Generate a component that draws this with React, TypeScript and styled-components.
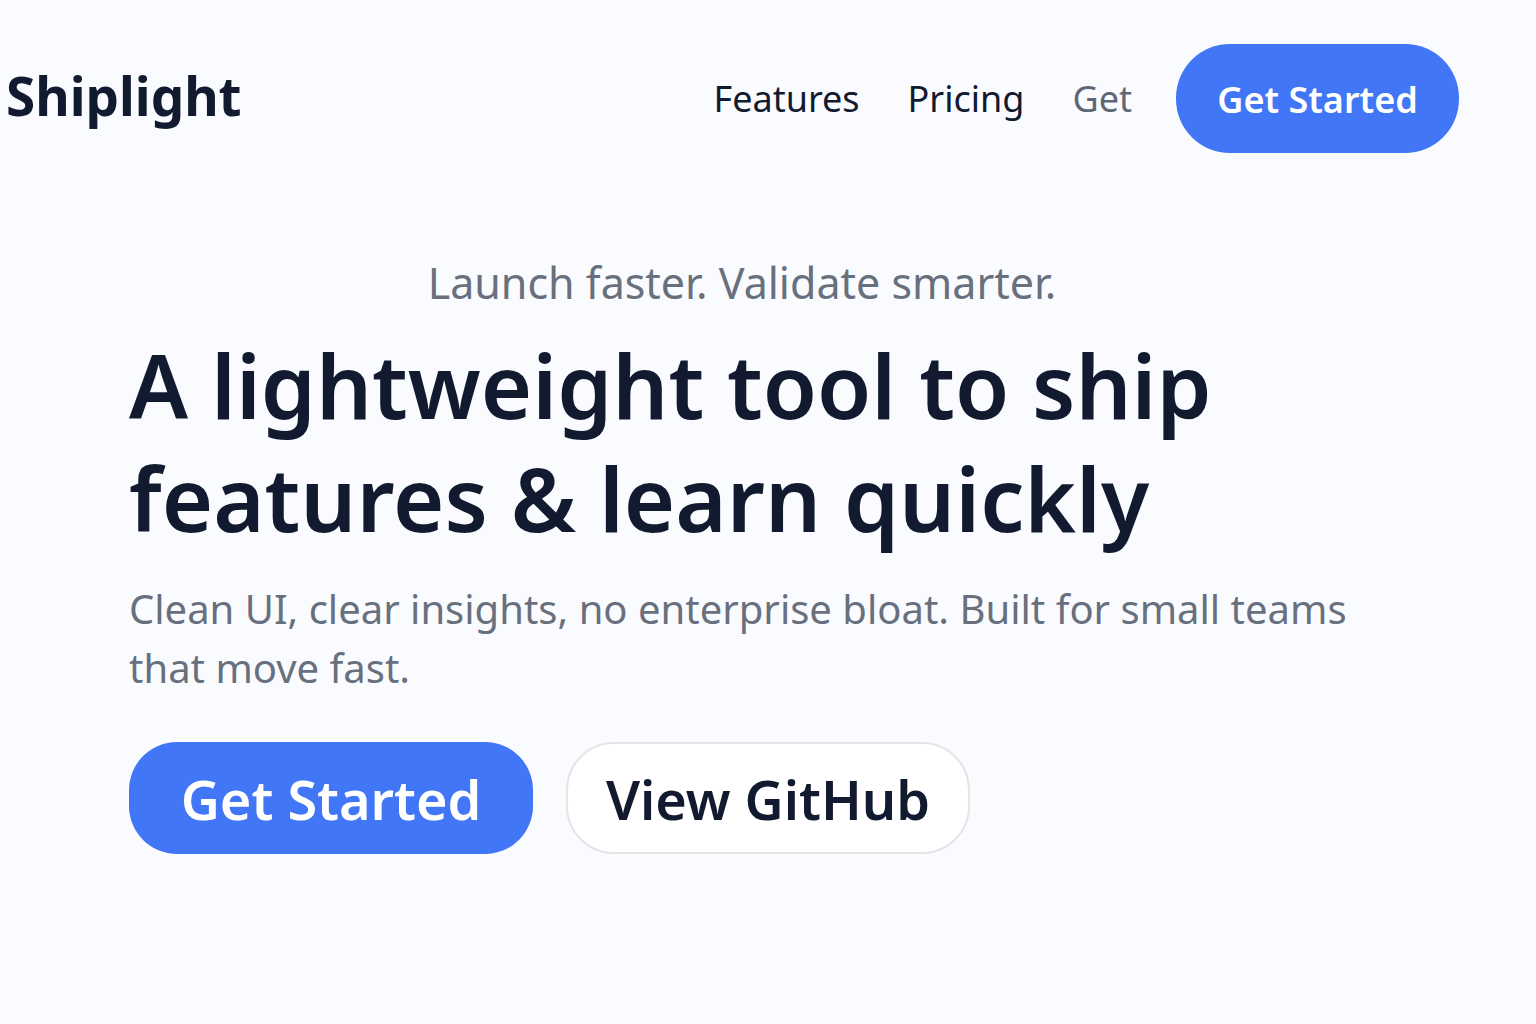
import React from "react";
import styled, { createGlobalStyle } from "styled-components";

const GlobalStyle = createGlobalStyle`
  *, *::before, *::after { box-sizing: border-box; }
  body {
    margin: 0;
    background: #fafbff;
    color: #111a2f;
    font-family: "Noto Sans", "Open Sans", sans-serif;
  }
`;

const Header = styled.header`
  display: flex;
  align-items: center;
  justify-content: space-between;
  padding: 44px 77px 0 6px;
`;

const Brand = styled.a`
  padding-bottom: 6px;
  color: #111a2f;
  font-size: 53px;
  font-weight: 700;
  line-height: 72px;
  text-decoration: none;
`;

const Nav = styled.nav`
  display: flex;
  align-items: center;
  gap: 44px;
`;

const NavLinks = styled.div`
  display: flex;
  gap: 48px;
`;

const NavLink = styled.a<{ $muted?: boolean }>`
  color: ${(p) => (p.$muted ? "#5f6776" : "#111a2f")};
  font-size: 36px;
  line-height: 52px;
  text-decoration: none;
`;

const Button = styled.button<{ $kind: "nav" | "primary" | "outline" }>`
  display: flex;
  align-items: center;
  justify-content: center;
  height: ${(p) => (p.$kind === "nav" ? 109 : 112)}px;
  min-width: ${(p) => (p.$kind === "nav" ? 283 : 404)}px;
  padding: 2px 0 0;
  border: ${(p) => (p.$kind === "outline" ? "2px solid #e2e4e6" : "0")};
  border-radius: ${(p) => (p.$kind === "nav" ? 54 : 48)}px;
  background: ${(p) => (p.$kind === "outline" ? "#ffffff" : "#4176f6")};
  color: ${(p) => (p.$kind === "outline" ? "#111a2f" : "#ffffff")};
  font-family: inherit;
  font-size: ${(p) => (p.$kind === "nav" ? 36 : 54)}px;
  font-weight: 600;
  line-height: 1;
  white-space: nowrap;
  cursor: pointer;
`;

const Hero = styled.main`
  padding: 100px 129px;
`;

const Eyebrow = styled.p`
  margin: 0;
  padding-right: 52px;
  color: #68707e;
  font-size: 43px;
  line-height: 60px;
  text-align: center;
`;

const Title = styled.h1`
  margin: 16px 0 0;
  max-width: 1200px;
  font-size: 88px;
  font-weight: 600;
  line-height: 113px;
`;

const Lead = styled.p`
  margin: 24px 0 0;
  color: #68707e;
  font-size: 40px;
  line-height: 59px;
`;

const Actions = styled.div`
  display: flex;
  gap: 33px;
  margin-top: 45px;
`;

export default function App() {
  return (
    <>
      <GlobalStyle />
      <Header>
        <Brand href="#">Shiplight</Brand>
        <Nav>
          <NavLinks>
            <NavLink href="#features">Features</NavLink>
            <NavLink href="#pricing">Pricing</NavLink>
            <NavLink href="#get" $muted>Get</NavLink>
          </NavLinks>
          <Button type="button" $kind="nav">Get Started</Button>
        </Nav>
      </Header>
      <Hero>
        <Eyebrow>Launch faster. Validate smarter.</Eyebrow>
        <Title>A lightweight tool to ship features &amp; learn quickly</Title>
        <Lead>
          Clean UI, clear insights, no enterprise bloat. Built for small teams that move fast.
        </Lead>
        <Actions>
          <Button type="button" $kind="primary">Get Started</Button>
          <Button type="button" $kind="outline">View GitHub</Button>
        </Actions>
      </Hero>
    </>
  );
}
